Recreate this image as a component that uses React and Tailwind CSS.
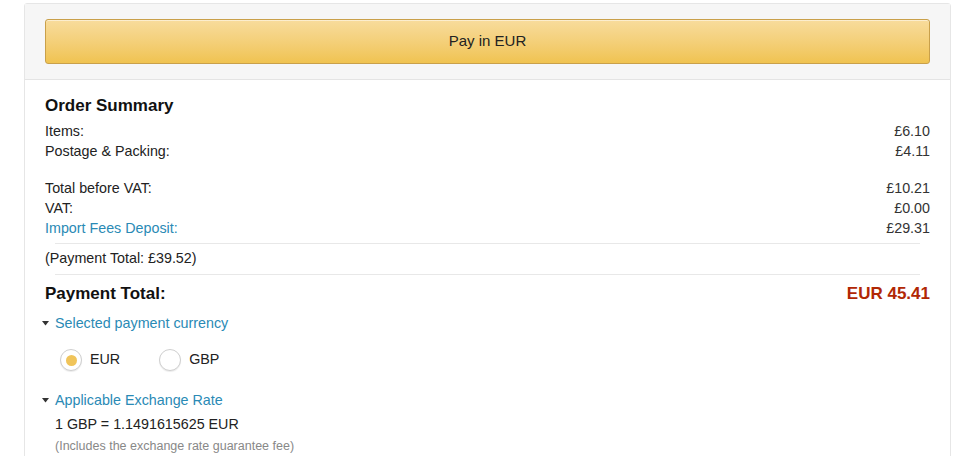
import React from "react";

const Caret = () => (
  <svg width="7" height="5" viewBox="0 0 7 5" className="ml-[-3px] mr-[6px] mt-[-2px]">
    <path d="M0 0 L7 0 L3.5 4.5 Z" fill="#333" />
  </svg>
);

const Row = ({ label, value, link }) => (
  <div className="flex justify-between h-[20px] items-center">
    <span className={link ? "text-[#2a8ab5]" : "text-[#222]"}>{label}</span>
    <span className="text-[#333]">{value}</span>
  </div>
);

export default function App() {
  return (
    <div
      className="w-[960px] h-[456px] bg-white overflow-hidden pt-[3px]"
      style={{ fontFamily: '"Liberation Sans", Arial, sans-serif' }}
    >
      <div className="ml-[24px] w-[927px] border border-[#e6e6e6] rounded-[3px] h-[470px]">
        <div className="bg-[#f6f6f6] border-b border-[#e4e4e4] px-[20px] py-[15px]">
          <div className="h-[45px] rounded-[3px] border border-[#c9a04a] bg-gradient-to-b from-[#f8dc9c] to-[#f0c350] flex items-center justify-center text-[15px] text-[#222] shadow-[inset_0_1px_0_rgba(255,255,255,0.5)]">
            Pay in EUR
          </div>
        </div>
        <div className="px-[20px] pt-[15px] text-[14.3px] text-[#222]">
          <div className="text-[17px] font-bold leading-[22px] text-[#111]">Order Summary</div>
          <div className="mt-[5px]">
            <Row label="Items:" value="£6.10" />
            <Row label="Postage & Packing:" value="£4.11" />
          </div>
          <div className="mt-[17px]">
            <Row label="Total before VAT:" value="£10.21" />
            <Row label="VAT:" value="£0.00" />
            <Row label="Import Fees Deposit:" value="£29.31" link />
          </div>
          <div className="ml-[10px] mr-[10px] mt-[4px] border-t border-[#e8e8e8]" />
          <div className="h-[20px] flex items-center mt-[5px]">(Payment Total: £39.52)</div>
          <div className="ml-[10px] mr-[10px] mt-[5px] border-t border-[#e8e8e8]" />
          <div className="flex justify-between items-center h-[22px] mt-[8px] text-[17px] font-bold">
            <span className="text-[#111]">Payment Total:</span>
            <span className="text-[#b12704]">EUR 45.41</span>
          </div>
          <div className="flex items-center h-[20px] mt-[9px] text-[#2a8ab5]">
            <Caret />
            Selected payment currency
          </div>
          <div className="flex items-center h-[22px] mt-[15px] ml-[15px]">
            <div className="w-[22px] h-[22px] rounded-full border border-[#cfcfcf] bg-white flex items-center justify-center shadow-[0_1px_1px_rgba(0,0,0,0.08)]">
              <div className="w-[11px] h-[11px] rounded-full bg-[#f0c45a]" />
            </div>
            <span className="ml-[8px] text-[#222]">EUR</span>
            <div className="ml-[39px] w-[22px] h-[22px] rounded-full border border-[#cfcfcf] bg-white shadow-[0_1px_1px_rgba(0,0,0,0.08)]" />
            <span className="ml-[8px] text-[#222]">GBP</span>
          </div>
          <div className="flex items-center h-[20px] mt-[20px] text-[#2a8ab5]">
            <Caret />
            Applicable Exchange Rate
          </div>
          <div className="ml-[10px] h-[20px] flex items-center mt-[4px]">1 GBP = 1.1491615625 EUR</div>
          <div className="ml-[10px] h-[16px] flex items-center mt-[3px] text-[12.5px] text-[#888]">
            (Includes the exchange rate guarantee fee)
          </div>
        </div>
      </div>
    </div>
  );
}
